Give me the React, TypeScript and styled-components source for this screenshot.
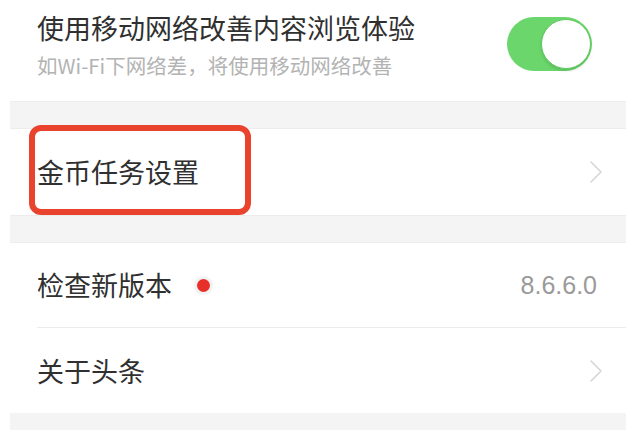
import * as React from 'react';
import styled, { createGlobalStyle } from 'styled-components';

const GlobalStyle = createGlobalStyle`
  html, body {
    margin: 0;
    padding: 0;
    background: #fff;
  }
  body {
    font-family: "Noto Sans CJK SC", "Noto Sans", sans-serif;
  }
`;

const Page = styled.div`
  width: 626px;
  height: 430px;
  overflow: hidden;
  background: #fff;
  padding-left: 10px;
  box-sizing: border-box;
`;

const List = styled.div`
  display: flex;
  flex-direction: column;
  background: #f4f4f4;
  min-height: 430px;
`;

const Group = styled.div`
  display: flex;
  flex-direction: column;
  background: #fff;
`;

const Gap = styled.div`
  height: 28px;
  border-top: 1px solid #ececec;
  border-bottom: 1px solid #ececec;
  box-sizing: border-box;
  background: #f4f4f4;
`;

const Row = styled.div<{ $height: number }>`
  position: relative;
  display: flex;
  align-items: center;
  height: ${p => p.$height}px;
  padding: 0 23px 0 27px;
  box-sizing: border-box;
`;

const TextBlock = styled.div`
  display: flex;
  flex-direction: column;
  flex: 1;
  gap: 6px;
  margin-top: -14px;
`;

const Title = styled.div`
  font-size: 27px;
  line-height: 36px;
  color: #303030;
  white-space: nowrap;
`;

const Label = styled.div`
  flex: 1;
  display: flex;
  align-items: center;
  font-size: 27px;
  line-height: 36px;
  color: #303030;
  white-space: nowrap;
`;

const Subtitle = styled.div`
  font-size: 20.5px;
  line-height: 26px;
  color: #b3b3b3;
  white-space: nowrap;
`;

const Toggle = styled.div<{ $on: boolean }>`
  position: relative;
  width: 85px;
  height: 54px;
  border-radius: 27px;
  margin-right: 11px;
  margin-top: -13px;
  background: ${p => (p.$on ? '#6bd66b' : '#e5e5e5')};
  flex-shrink: 0;
`;

const Knob = styled.div`
  position: absolute;
  top: 2px;
  right: 1px;
  width: 48px;
  height: 48px;
  border-radius: 50%;
  background: #fff;
  border: 1px solid #5fc95f;
  box-shadow: 0 2px 3px rgba(0, 0, 0, 0.12);
`;

const Dot = styled.span`
  display: inline-block;
  width: 13px;
  height: 13px;
  border-radius: 50%;
  background: #e8302a;
  margin-left: 25px;
  box-shadow: 0 0 0 3px #f3f3f3;
`;

const Value = styled.div`
  font-family: "Liberation Sans", Arial, sans-serif;
  font-size: 25px;
  color: #9a9a9a;
  margin-right: 6px;
`;

const Divider = styled.div`
  height: 1px;
  margin-left: 27px;
  background: #ececec;
`;

const Highlight = styled.div`
  position: absolute;
  top: -4px;
  left: 19px;
  width: 222px;
  height: 90px;
  border: 6px solid #e9432d;
  border-radius: 12px;
  box-sizing: border-box;
  pointer-events: none;
`;

function Chevron() {
  return (
    <svg width="14" height="24" viewBox="0 0 14 24" fill="none">
      <polyline points="2,2 12,12 2,22" stroke="#d6d6d6" strokeWidth="1.6" strokeLinecap="round" strokeLinejoin="round" />
    </svg>
  );
}

export default function App() {
  return (
    <>
      <GlobalStyle />
      <Page>
        <List>
          <Group>
            <Row $height={101}>
              <TextBlock>
                <Title>使用移动网络改善内容浏览体验</Title>
                <Subtitle>如Wi-Fi下网络差，将使用移动网络改善</Subtitle>
              </TextBlock>
              <Toggle $on>
                <Knob />
              </Toggle>
            </Row>
          </Group>
          <Gap />
          <Group>
            <Row $height={86}>
              <Label>金币任务设置</Label>
              <Chevron />
              <Highlight />
            </Row>
          </Group>
          <Gap />
          <Group>
            <Row $height={84}>
              <Label>
                检查新版本
                <Dot />
              </Label>
              <Value>8.6.6.0</Value>
            </Row>
            <Divider />
            <Row $height={85}>
              <Label>关于头条</Label>
              <Chevron />
            </Row>
          </Group>
        </List>
      </Page>
    </>
  );
}
